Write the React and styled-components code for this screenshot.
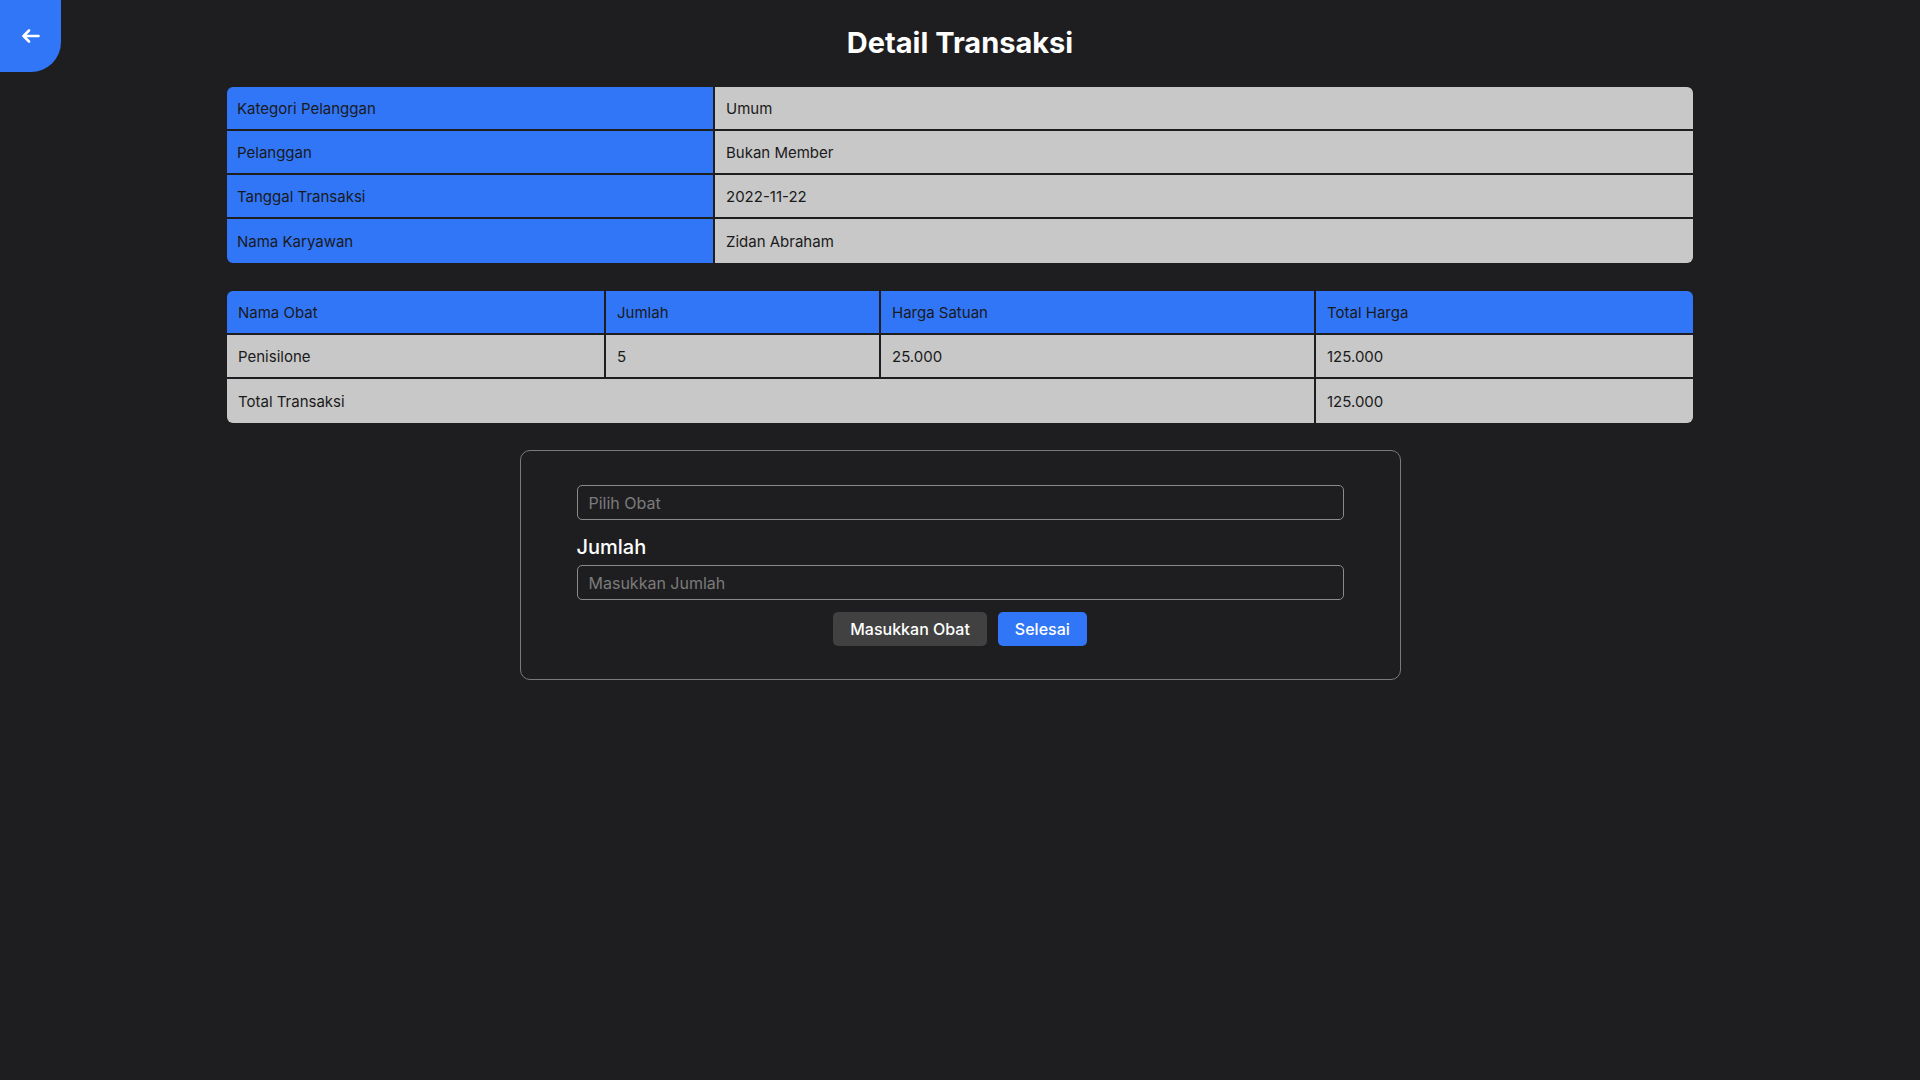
import React from "react";
import styled, { createGlobalStyle } from "styled-components";

const GlobalStyle = createGlobalStyle`
  body {
    margin: 0;
    background: #1e1e20;
    font-family: Inter, "Open Sans", sans-serif;
  }
`;

const BLUE = "#3176f7";
const GREY = "#c8c8c8";
const BG = "#1e1e20";

const Page = styled.div`
  position: relative;
  min-height: 100vh;
  padding-top: 25px;
  box-sizing: border-box;
`;

const BackButton = styled.button`
  position: absolute;
  top: 0;
  left: 0;
  width: 61px;
  height: 72px;
  border: none;
  padding: 0;
  background: ${BLUE};
  border-bottom-right-radius: 30px;
  display: flex;
  align-items: center;
  justify-content: center;
  cursor: pointer;
`;

const Title = styled.h1`
  margin: 0 0 26px;
  text-align: center;
  color: #fff;
  font-size: 29px;
  line-height: 36px;
  font-weight: 700;
`;

const Table = styled.table`
  width: 1466px;
  margin: 0 auto ${(props) => props.$gap || 0}px;
  border-collapse: separate;
  border-spacing: 0;
  table-layout: fixed;
  font-size: 15px;
  color: #1a1a1a;

  tr:first-child > *:first-child {
    border-top-left-radius: 6px;
  }
  tr:first-child > *:last-child {
    border-top-right-radius: 6px;
  }
  tr:last-child > *:first-child {
    border-bottom-left-radius: 6px;
  }
  tr:last-child > *:last-child {
    border-bottom-right-radius: 6px;
  }
  tr > *:not(:last-child) {
    border-right: 2px solid ${BG};
  }
  tr:not(:last-child) > * {
    border-bottom: 2px solid ${BG};
  }
`;

const Cell = styled.td`
  height: 44px;
  box-sizing: border-box;
  padding: 0 ${(props) => props.$pad || 10}px;
  background: ${(props) => (props.$head ? BLUE : GREY)};
  text-align: left;
  font-weight: 400;
  vertical-align: middle;
`;

const FormCard = styled.div`
  width: 881px;
  box-sizing: border-box;
  margin: 0 auto;
  padding: 34px 56px 33px;
  border: 1px solid #7a7a7a;
  border-radius: 10px;
  display: flex;
  flex-direction: column;
`;

const Input = styled.input`
  height: 35px;
  box-sizing: border-box;
  width: 100%;
  padding: 0 11px;
  border: 1px solid #8a8a8a;
  border-radius: 5px;
  background: transparent;
  color: #fff;
  font-family: inherit;
  font-size: 16px;

  &::placeholder {
    color: #7b7b7b;
  }
`;

const Label = styled.label`
  margin: 15px 0 6px;
  color: #fff;
  font-size: 20px;
  line-height: 24px;
  font-weight: 500;
`;

const Actions = styled.div`
  margin-top: 12px;
  display: flex;
  justify-content: center;
  gap: 11px;
`;

const Button = styled.button`
  height: 34px;
  padding: 0 17px;
  border: none;
  border-radius: 5px;
  background: ${(props) => (props.$primary ? BLUE : "#414141")};
  color: #fff;
  font-family: inherit;
  font-size: 16px;
  font-weight: 500;
  cursor: pointer;
`;

const info = [
  ["Kategori Pelanggan", "Umum"],
  ["Pelanggan", "Bukan Member"],
  ["Tanggal Transaksi", "2022-11-22"],
  ["Nama Karyawan", "Zidan Abraham"],
];

const items = [{ name: "Penisilone", qty: 5, price: "25.000", total: "125.000" }];

const App = () => {
  return (
    <Page>
      <GlobalStyle />
      <BackButton aria-label="Kembali">
        <svg width="18" height="14" viewBox="0 0 18 14" fill="none">
          <path
            d="M7 1.5L1.5 7L7 12.5M1.5 7H16.5"
            stroke="#fff"
            strokeWidth="2.6"
            strokeLinecap="round"
            strokeLinejoin="round"
          />
        </svg>
      </BackButton>

      <Title>Detail Transaksi</Title>

      <Table $gap={28}>
        <colgroup>
          <col style={{ width: 488 }} />
          <col />
        </colgroup>
        <tbody>
          {info.map(([label, value]) => (
            <tr key={label}>
              <Cell $head>{label}</Cell>
              <Cell $pad={11}>{value}</Cell>
            </tr>
          ))}
        </tbody>
      </Table>

      <Table $gap={27}>
        <colgroup>
          <col style={{ width: 379 }} />
          <col style={{ width: 275 }} />
          <col style={{ width: 435 }} />
          <col />
        </colgroup>
        <tbody>
          <tr>
            <Cell as="th" $head $pad={11}>Nama Obat</Cell>
            <Cell as="th" $head $pad={11}>Jumlah</Cell>
            <Cell as="th" $head $pad={11}>Harga Satuan</Cell>
            <Cell as="th" $head $pad={11}>Total Harga</Cell>
          </tr>
          {items.map((item) => (
            <tr key={item.name}>
              <Cell $pad={11}>{item.name}</Cell>
              <Cell $pad={11}>{item.qty}</Cell>
              <Cell $pad={11}>{item.price}</Cell>
              <Cell $pad={11}>{item.total}</Cell>
            </tr>
          ))}
          <tr>
            <Cell $pad={11} colSpan={3}>Total Transaksi</Cell>
            <Cell $pad={11}>125.000</Cell>
          </tr>
        </tbody>
      </Table>

      <FormCard>
        <Input placeholder="Pilih Obat" />
        <Label>Jumlah</Label>
        <Input placeholder="Masukkan Jumlah" />
        <Actions>
          <Button>Masukkan Obat</Button>
          <Button $primary>Selesai</Button>
        </Actions>
      </FormCard>
    </Page>
  );
};

export default App;
